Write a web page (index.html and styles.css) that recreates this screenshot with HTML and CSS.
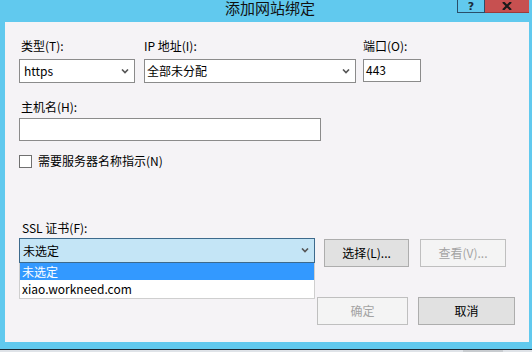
FILE: index.html
```html
<!DOCTYPE html>
<html lang="zh-CN">
<head>
<meta charset="utf-8">
<title>添加网站绑定</title>
<link rel="stylesheet" href="styles.css">
</head>
<body>
<div class="window">
  <div class="titlebar">
    <div class="title">添加网站绑定</div>
    <div class="caption-buttons">
      <div class="cap-btn help">?</div>
      <div class="cap-btn close">
        <svg width="10" height="8" viewBox="0 0 10 8"><path d="M1 0 L9 8 M9 0 L1 8" stroke="#1a1a1a" stroke-width="2.2" fill="none"/></svg>
      </div>
    </div>
  </div>
  <div class="frame">
    <div class="content">
      <div class="row1">
        <div class="col col-type">
          <div class="label">类型(T):</div>
          <div class="combo"><span>https</span><svg class="chev" width="8" height="5" viewBox="0 0 8 5"><path d="M1 0.5 L4 3.5 L7 0.5" stroke="#555" stroke-width="1.6" fill="none"/></svg></div>
        </div>
        <div class="col col-ip">
          <div class="label">IP 地址(I):</div>
          <div class="combo"><span>全部未分配</span><svg class="chev" width="8" height="5" viewBox="0 0 8 5"><path d="M1 0.5 L4 3.5 L7 0.5" stroke="#555" stroke-width="1.6" fill="none"/></svg></div>
        </div>
        <div class="col col-port">
          <div class="label">端口(O):</div>
          <div class="textbox port">443</div>
        </div>
      </div>

      <div class="label host-label">主机名(H):</div>
      <div class="textbox host"></div>

      <div class="check-row">
        <div class="checkbox"></div>
        <span>需要服务器名称指示(N)</span>
      </div>

      <div class="label ssl-label">SSL 证书(F):</div>
      <div class="ssl-row">
        <div class="ssl-wrap">
          <div class="combo ssl"><span>未选定</span><svg class="chev" width="8" height="5" viewBox="0 0 8 5"><path d="M1 0.5 L4 3.5 L7 0.5" stroke="#555" stroke-width="1.6" fill="none"/></svg></div>
          <div class="dropdown">
            <div class="item selected">未选定</div>
            <div class="item">xiao.workneed.com</div>
          </div>
        </div>
        <div class="btn btn-select">选择(L)...</div>
        <div class="btn btn-view disabled">查看(V)...</div>
      </div>

      <div class="footer">
        <div class="btn btn-ok disabled">确定</div>
        <div class="btn btn-cancel">取消</div>
      </div>
    </div>
  </div>
  <div class="frame-bottom"></div>
  <div class="taskbar"><div class="task-item"></div></div>
</div>
</body>
</html>
```
FILE: styles.css
```css
* { box-sizing: border-box; }
html, body { margin: 0; padding: 0; }
body {
  width: 532px;
  height: 352px;
  overflow: hidden;
  background: #61c9ee;
  font-family: "Noto Sans CJK SC", "Microsoft YaHei", sans-serif;
  font-size: 12px;
  color: #000;
}
.window { width: 532px; height: 352px; display: flex; flex-direction: column; }

.titlebar {
  height: 22px;
  position: relative;
  background: #61c9ee;
}
.title {
  text-align: center;
  font-size: 15px;
  line-height: 16px;
  height: 16px;
  padding-left: 8px;
  color: #111;
}
.caption-buttons {
  position: absolute;
  top: 0;
  left: 457px;
  display: flex;
}
.cap-btn {
  height: 13px;
  display: flex;
  align-items: center;
  justify-content: center;
  font-weight: bold;
  font-size: 11px;
  line-height: 11px;
  font-family: "DejaVu Sans", sans-serif;
}
.help {
  width: 28px;
  background: #61c9ee;
  border: 1px solid #2a4f6a;
  border-top: none;
  color: #1a2a3a;
}
.close {
  width: 44px;
  background: #c75050;
  border-bottom: 1px solid #9c3b3b;
}

.frame {
  height: 320px;
  padding: 0 3px 0 5px;
}
.content {
  height: 320px;
  background: #f5f3f6;
  padding: 16px 14px 0 14px;
  position: relative;
}
.frame-bottom { height: 7px; background: #61c9ee; }
.taskbar {
  height: 3px;
  background: #dfe3e8;
  border-top: 1px solid #1c2833;
  position: relative;
}
.task-item {
  position: absolute;
  left: 463px;
  top: 0;
  width: 40px;
  height: 2px;
  background: #c8ccd0;
}

.label {
  line-height: 16px;
  height: 16px;
  white-space: nowrap;
}

.row1 { display: flex; }
.col { display: flex; flex-direction: column; gap: 5px; }
.col-type { width: 116px; }
.col-ip { width: 212px; margin-left: 9px; }
.col-port { width: 58px; margin-left: 7px; }
.col-type .label { padding-left: 2px; }

.combo {
  height: 24px;
  border: 1px solid #8b8b8b;
  background: #fff;
  display: flex;
  align-items: center;
  justify-content: space-between;
  padding: 0 5px 0 4px;
  line-height: 16px;
}
.col-ip .combo { padding-left: 2px; }
.chev { display: block; }

.textbox {
  height: 23px;
  border: 1px solid #8b8b8b;
  background: #fff;
  padding: 0 2px;
  line-height: 20px;
}

.host-label { margin-top: 16px; padding-left: 2px; }
.host { width: 302px; margin-top: 3px; }

.check-row {
  margin-top: 12px;
  height: 16px;
  display: flex;
  align-items: center;
  gap: 6px;
  line-height: 16px;
}
.checkbox {
  width: 13px;
  height: 13px;
  border: 1px solid #707070;
  background: #fff;
}

.ssl-label { margin-top: 51px; padding-left: 3px; }
.ssl-row {
  display: flex;
  align-items: flex-start;
  margin-top: 2px;
}
.ssl-wrap { position: relative; width: 296px; }
.combo.ssl {
  height: 25px;
  background: #c4e5f6;
  border-color: #3d6a8c;
  padding-left: 3px;
}
.dropdown {
  position: absolute;
  top: 25px;
  left: 0;
  width: 296px;
  height: 36px;
  background: #fff;
  border: 1px solid #cfcfcf;
  border-top: none;
  z-index: 2;
}
.item {
  height: 17px;
  line-height: 17px;
  padding-left: 2px;
  white-space: nowrap;
}
.item.selected { background: #3399ff; color: #fff; }

.btn {
  height: 28px;
  border: 1px solid #adadad;
  background: #e1e1e1;
  display: flex;
  align-items: center;
  justify-content: center;
  line-height: 16px;
  white-space: nowrap;
}
.btn.disabled {
  background: #f4f4f4;
  border-color: #bfbfbf;
  color: #a3a3a3;
}
.btn-select { width: 85px; margin-left: 9px; margin-top: 1px; }
.btn-view { width: 86px; margin-left: 11px; margin-top: 1px; }

.footer {
  display: flex;
  justify-content: flex-end;
  margin-top: 30px;
}
.btn-ok { width: 91px; }
.btn-cancel { width: 97px; margin-left: 10px; }
```
